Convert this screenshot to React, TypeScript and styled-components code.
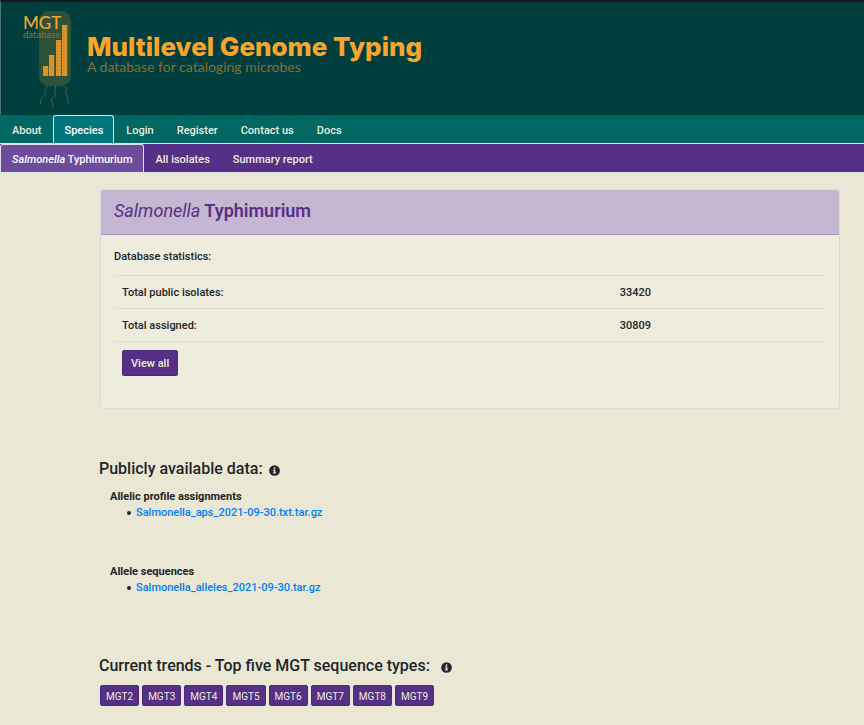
import React from "react";
import styled, { createGlobalStyle, css } from "styled-components";

const GlobalStyle = createGlobalStyle`
  * { box-sizing: border-box; }
  body {
    margin: 0;
    background: #eae8d5;
    color: #212529;
    font: 500 11px/16px Roboto, "Liberation Sans", sans-serif;
  }
  h1, h2, h3, p, ul { margin: 0; padding: 0; }
  button { font: inherit; cursor: pointer; }
`;

const Banner = styled.header`
  display: flex;
  align-items: flex-start;
  height: 115px;
  border-top: 2px solid #16191c;
  border-left: 1px solid #4d7774;
  background: #003f3d;
`;

const Logo = styled.svg`
  width: 86px;
  height: 112px;
  flex: none;
`;

const BannerText = styled.div`
  padding-top: 32px;
`;

const SiteTitle = styled.h1`
  color: #f8a52d;
  font-family: Inter, "Liberation Sans", sans-serif;
  font-size: 26px;
  font-weight: 800;
  line-height: 25px;
`;

const Tagline = styled.p`
  color: #806f3b;
  font-family: Lato, sans-serif;
  font-size: 14px;
  font-weight: 400;
  line-height: 16px;
`;

const NavBar = styled.nav<{ $tone: "teal" | "purple" }>`
  display: flex;
  height: 29px;
  border-bottom: 1px solid #dee2e6;
  background: ${(p) => (p.$tone === "teal" ? "#006762" : "#563087")};
`;

const NavLink = styled.a<{ $active?: "teal" | "purple" }>`
  padding: 7px 10px 4px 11px;
  border: 1px solid transparent;
  border-bottom: 0;
  border-radius: 3px 3px 0 0;
  color: #eeecdc;
  text-decoration: none;
  white-space: nowrap;
  ${(p) =>
    p.$active &&
    css`
      border-color: #dee2e6;
      background: ${p.$active === "teal" ? "#00777c" : "#6d4b9d"};
      color: #fff;
    `}
`;

const Main = styled.main`
  margin: 16px 24px 0 99px;
`;

const Card = styled.section`
  margin-left: 1px;
  border: 1px solid #dadbdc;
  border-radius: 3px;
  background: #eeecdc;
  overflow: hidden;
`;

const CardHeader = styled.div`
  padding: 8px 13px 11px;
  border-bottom: 1px solid #a797b8;
  background: #c5b6d1;
`;

const CardTitle = styled.h2`
  color: #563087;
  font-size: 18px;
  font-weight: 600;
  line-height: 25px;
  em { font-weight: 400; }
`;

const CardBody = styled.div`
  padding: 14px 14px 24px 13px;
`;

const Stats = styled.table`
  width: 100%;
  margin-top: 10px;
  border-collapse: collapse;
  table-layout: fixed;
  td, th {
    padding: 9px 8px 7px;
    border-top: 1px solid #dadde0;
    font-weight: 500;
    text-align: left;
    vertical-align: top;
  }
  td[colspan] { padding: 8px; }
  th { width: 70%; }
`;

const ViewAll = styled.button`
  display: block;
  height: 26px;
  padding: 2px 8px 0;
  border: 1px solid #4c297b;
  border-radius: 2px;
  background: #563087;
  color: #eeecdc;
`;

const Heading = styled.h2`
  display: flex;
  align-items: center;
  font-size: 16px;
  font-weight: 500;
  line-height: 20px;
`;

const Info = styled.svg<{ $gap: number }>`
  width: 11px;
  height: 11px;
  margin: 2px 0 0 ${(p) => p.$gap}px;
`;

const PublicData = styled.section`
  margin-top: 50px;
`;

const FileGroup = styled.div`
  height: 75px;
  padding-left: 11px;
`;

const FileGroups = styled.div`
  padding-top: 10px;
`;

const GroupTitle = styled.h3`
  font-size: 11px;
  font-weight: 700;
  line-height: 16px;
`;

const Files = styled.ul`
  padding-left: 17px;
  list-style: none;
  li {
    display: flex;
    align-items: center;
    gap: 5px;
  }
  li::before {
    content: "";
    width: 4px;
    height: 4px;
    border-radius: 50%;
    background: #212529;
  }
  a { color: #007bff; text-decoration: none; }
`;

const Trends = styled.section`
  margin-top: 17px;
`;

const Types = styled.div`
  display: flex;
  flex-wrap: wrap;
  gap: 3px;
  padding: 9px 0 0 1px;
`;

const TypeButton = styled.button`
  height: 21px;
  padding: 2px 5px 0;
  border: 1px solid #4c297b;
  border-radius: 2px;
  background: #563087;
  color: #eeecdc;
  font-size: 10px;
  font-weight: 400;
`;

const bars = [
  { x: 43, y: 66 },
  { x: 49, y: 55 },
  { x: 56, y: 40 },
  { x: 62, y: 25 },
];

function MicrobeLogo() {
  return (
    <Logo viewBox="1 2 86 112" role="img" aria-label="MGT database">
      <defs>
        <pattern id="grain" width="3" height="3" patternUnits="userSpaceOnUse">
          <rect width="3" height="3" fill="#d9952f" />
          <rect width="1" height="1" fill="#b8832e" />
        </pattern>
      </defs>
      <rect x="39" y="11" width="32" height="75" rx="10" fill="#2e5237" />
      {bars.map((b) => (
        <rect key={b.x} x={b.x} y={b.y} width="5.3" height={76 - b.y} fill="url(#grain)" />
      ))}
      <g fill="none" stroke="#45613f" strokeWidth="1">
        <path d="M46.500 85.500v3l-2 3 1 3-3 3-2 3v4" />
        <path d="M55.500 86v3l-1 4 1 3-4 3v3l2 2-2 4" />
        <path d="M63.500 86l3 3-1 4 2 3v4l1 4" />
      </g>
      <text x="23" y="29" fill="#f8a52d" fontFamily="Lato" fontSize="17">MGT</text>
      <text x="23" y="38" fill="#806f3b" fontFamily="Lato" fontSize="9.500">database</text>
    </Logo>
  );
}

function InfoIcon({ gap }: { gap: number }) {
  return (
    <Info $gap={gap} viewBox="0 0 512 512" role="img" aria-label="Information">
      <circle cx="256" cy="256" r="248" fill="#212529" />
      <circle cx="256" cy="145" r="44" fill="#eae8d5" />
      <path d="M196 212h98v124h26v54H192v-54h26v-70h-22z" fill="#eae8d5" />
    </Info>
  );
}

const pages = ["About", "Species", "Login", "Register", "Contact us", "Docs"];
const types = [2, 3, 4, 5, 6, 7, 8, 9];

export default function App() {
  return (
    <>
      <GlobalStyle />
      <Banner>
        <MicrobeLogo />
        <BannerText>
          <SiteTitle>Multilevel Genome Typing</SiteTitle>
          <Tagline>A database for cataloging microbes</Tagline>
        </BannerText>
      </Banner>
      <NavBar $tone="teal" aria-label="Site">
        {pages.map((p) => (
          <NavLink key={p} href="#" $active={p === "Species" ? "teal" : undefined}>{p}</NavLink>
        ))}
      </NavBar>
      <NavBar $tone="purple" aria-label="Species">
        <NavLink href="#" $active="purple"><em>Salmonella</em> Typhimurium</NavLink>
        <NavLink href="#">All isolates</NavLink>
        <NavLink href="#">Summary report</NavLink>
      </NavBar>
      <Main>
        <Card>
          <CardHeader>
            <CardTitle><em>Salmonella</em> Typhimurium</CardTitle>
          </CardHeader>
          <CardBody>
            <p>Database statistics:</p>
            <Stats>
              <tbody>
                <tr><th scope="row">Total public isolates:</th><td>33420</td></tr>
                <tr><th scope="row">Total assigned:</th><td>30809</td></tr>
                <tr><td colSpan={2}><ViewAll type="button">View all</ViewAll></td></tr>
              </tbody>
            </Stats>
          </CardBody>
        </Card>
        <PublicData>
          <Heading>Publicly available data:<InfoIcon gap={6} /></Heading>
          <FileGroups>
            <FileGroup>
              <GroupTitle>Allelic profile assignments</GroupTitle>
              <Files><li><a href="#">Salmonella_aps_2021-09-30.txt.tar.gz</a></li></Files>
            </FileGroup>
            <FileGroup>
              <GroupTitle>Allele sequences</GroupTitle>
              <Files><li><a href="#">Salmonella_alleles_2021-09-30.tar.gz</a></li></Files>
            </FileGroup>
          </FileGroups>
        </PublicData>
        <Trends>
          <Heading>Current trends - Top five MGT sequence types:<InfoIcon gap={11} /></Heading>
          <Types>
            {types.map((n) => <TypeButton key={n} type="button">MGT{n}</TypeButton>)}
          </Types>
        </Trends>
      </Main>
    </>
  );
}
